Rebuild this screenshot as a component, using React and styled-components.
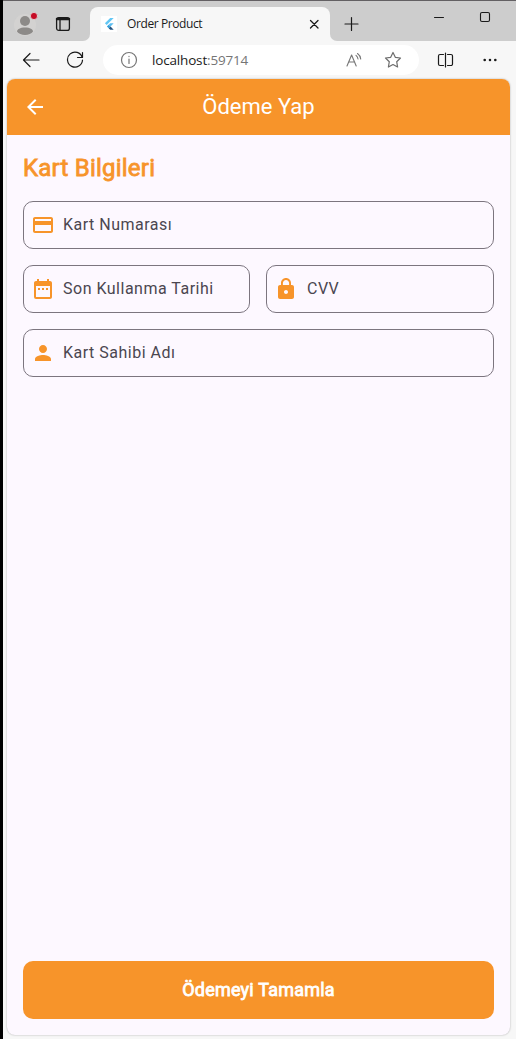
import React from 'react';
import styled, { createGlobalStyle } from 'styled-components';
import { MdArrowBack, MdCreditCard, MdDateRange, MdLock, MdPerson } from 'react-icons/md';

const orange = '#f7942a';

const GlobalStyle = createGlobalStyle`
  * { box-sizing: border-box; }
  body { margin: 0; background: #f7f7f7; }
`;

const Window = styled.div`
  display: flex;
  flex-direction: column;
  width: 516px;
  height: 1039px;
  border-left: 3px solid #000;
  background: #f7f7f7;
  overflow: hidden;
`;

const TabStrip = styled.div`
  display: flex;
  flex: none;
  height: 41px;
  border-top: 1px solid #636063;
`;

const StripStart = styled.div`
  display: flex;
  align-items: flex-start;
  width: 87px;
  padding: 10px 0 0 11px;
  gap: 14px;
  background: #cdcdcd;
  border-bottom-right-radius: 7px;
`;

const StripEnd = styled.div`
  display: flex;
  flex: 1;
  align-items: flex-start;
  padding: 8px 0 0 13px;
  background: #cdcdcd;
  border-bottom-left-radius: 7px;
`;

const TabSlot = styled.div`
  width: 240px;
  padding-top: 6px;
  background: #cdcdcd;
`;

const Tab = styled.div`
  display: flex;
  align-items: center;
  height: 34px;
  padding: 0 9px 0 11px;
  border-radius: 8px 8px 0 0;
  background: #f7f7f7;
`;

const Favicon = styled.span`
  display: flex;
  align-items: center;
  justify-content: center;
  width: 16px;
  height: 16px;
  background: #fff;
`;

const TabTitle = styled.span`
  flex: 1;
  margin-left: 10px;
  font: 12px/16px "Open Sans", "Noto Sans", sans-serif;
  letter-spacing: -0.4px;
  color: #1b1b1b;
`;

const Toolbar = styled.div`
  display: flex;
  align-items: center;
  flex: none;
  height: 38px;
  padding: 0 17px 0 19px;
`;

const AddressBar = styled.div`
  display: flex;
  align-items: center;
  width: 316px;
  height: 30px;
  margin: 0 18px 0 19px;
  padding: 0 17px 0 17px;
  border-radius: 15px;
  background: #fff;
`;

const Address = styled.span`
  flex: 1;
  margin-left: 14px;
  font: 13.5px/20px "Open Sans", "Noto Sans", sans-serif;
  letter-spacing: -0.17px;
  color: #1b1b1b;
`;

const Port = styled.span`
  color: #757575;
`;

const Glyph = styled.svg`
  display: block;
  flex: none;
  fill: none;
  stroke: ${({ $color }) => $color || '#1a1a1a'};
  stroke-width: ${({ $weight }) => $weight || 1.2};
  stroke-linecap: round;
  stroke-linejoin: round;
  margin-left: ${({ $before }) => $before || 0}px;
  margin-top: ${({ $drop }) => $drop || 0}px;
`;

const Page = styled.main`
  display: flex;
  flex-direction: column;
  width: 503px;
  height: 956px;
  margin-left: 4px;
  border-radius: 8px;
  background: #fdf8ff;
  box-shadow: 0 0 2px rgba(0, 0, 0, 0.32);
  overflow: hidden;
  font-family: Roboto, sans-serif;
`;

const AppBar = styled.header`
  display: grid;
  grid-template-columns: 56px 1fr 56px;
  align-items: center;
  justify-items: center;
  flex: none;
  height: 56px;
  background: ${orange};
  color: #fff;
`;

const AppTitle = styled.h1`
  margin: 0;
  font-size: 22px;
  font-weight: 400;
  line-height: 28px;
`;

const Content = styled.div`
  display: flex;
  flex: 1;
  flex-direction: column;
  padding: 16px;
`;

const Heading = styled.h2`
  margin: 0 0 16px;
  font-size: 24px;
  font-weight: 400;
  line-height: 34px;
  letter-spacing: 0.22px;
  color: ${orange};
  -webkit-text-stroke: 0.8px ${orange};
`;

const Form = styled.div`
  display: flex;
  flex: 1;
  flex-direction: column;
  gap: 16px;
`;

const FieldRow = styled.div`
  display: grid;
  grid-template-columns: ${({ $columns }) => $columns || '1fr'};
  gap: 16px;
`;

const FieldBox = styled.label`
  display: flex;
  align-items: center;
  height: 48px;
  padding-left: 7px;
  gap: ${({ $gap }) => $gap || 8}px;
  border: 1px solid #7c757f;
  border-radius: 10px;
  color: #4b4650;
  font-size: 16px;
  line-height: 24px;
  letter-spacing: 0.5px;

  svg {
    flex: none;
    color: ${orange};
  }
`;

const FieldText = styled.span`
  white-space: nowrap;
`;

const SubmitButton = styled.button`
  height: 58px;
  padding: 0;
  border: 0;
  border-radius: 10px;
  background: ${orange};
  color: #fff;
  font: 400 18px/24px Roboto, sans-serif;
  letter-spacing: 0.22px;
  -webkit-text-stroke: 0.8px #fff;
`;

function Field({ icon: Icon, label, gap }) {
  return (
    <FieldBox $gap={gap}>
      <Icon size={24} />
      <FieldText>{label}</FieldText>
    </FieldBox>
  );
}

function BrowserTabs() {
  return (
    <TabStrip>
      <StripStart>
        <Glyph width="26" height="26" viewBox="0 0 26 26">
          <circle cx="11" cy="14" r="11" fill="#d3d2d1" stroke="none" />
          <circle cx="11" cy="10" r="5" fill="#8c8a88" stroke="none" />
          <path d="M3 20.500c0-2.300 3-4 8-4s8 1.700 8 4c-1.500 2.300-4.500 3.500-8 3.500s-6.500-1.200-8-3.500Z" fill="#8c8a88" stroke="none" />
          <circle cx="20" cy="5" r="3.600" fill="#c60b25" stroke="#e1dada" strokeWidth=".8" />
        </Glyph>
        <Glyph width="16" height="16" viewBox="0 0 16 16" $drop={5} $before={1} $weight={1.3}>
          <rect x="1.600" y="1.600" width="12.800" height="12.800" rx="2.200" />
          <path d="M2 3h12" strokeWidth="2.500" />
          <path d="M5 4v10" />
        </Glyph>
      </StripStart>
      <TabSlot>
        <Tab>
          <Favicon>
            <svg width="16" height="16" viewBox="0 0 16 16">
              <path d="M9.200 2h3.500l-7 7-1.800-1.800Z" fill="#62c7f5" />
              <path d="M9.200 7.300h3.500L9.500 10.500l-1.800-1.800Z" fill="#5abdf0" />
              <path d="M5.900 10.500 7.700 8.700l1.800 1.800-1.800 1.800Z" fill="#319fdd" />
              <path d="m7.700 12.300 1.800-1.800 3.200 3.200H9.200Z" fill="#24527e" />
            </svg>
          </Favicon>
          <TabTitle>Order Product</TabTitle>
          <Glyph width="13" height="13" viewBox="0 0 13 13" $weight={1.3}>
            <path d="m2.500 2.500 7.500 7.500m0-7.500L2.500 10" />
          </Glyph>
        </Tab>
      </TabSlot>
      <StripEnd>
        <Glyph width="18" height="18" viewBox="0 0 18 18" $drop={6} $before={-1}>
          <path d="M9.500 2.500v13M3 9h13" />
        </Glyph>
        <Glyph width="12" height="12" viewBox="0 0 12 12" $drop={3} $before={73} $weight={1}>
          <path d="M1.500 5.500h9" />
        </Glyph>
        <Glyph width="12" height="12" viewBox="0 0 12 12" $drop={2} $before={34} $weight={1.1}>
          <rect x="1.500" y="1.500" width="9" height="9" rx="1.500" />
        </Glyph>
      </StripEnd>
    </TabStrip>
  );
}

function BrowserToolbar() {
  return (
    <Toolbar>
      <Glyph width="18" height="18" viewBox="0 0 18 18">
        <path d="M8 2.500 1.500 9 8 15.500M1.500 9H17" />
      </Glyph>
      <Glyph width="18" height="18" viewBox="0 0 18 18" $before={26}>
        <path d="M16.200 6.500A7.500 7.500 0 1 0 16.500 9M16.500 1.500v5h-5" />
      </Glyph>
      <AddressBar>
        <Glyph width="18" height="18" viewBox="0 0 18 18" $color="#767676">
          <circle cx="9" cy="9" r="7.500" />
          <path d="M9 8v4.500M9 5.400v.2" />
        </Glyph>
        <Address>localhost<Port>:59714</Port></Address>
        <Glyph width="18" height="18" viewBox="0 0 18 18" $color="#767676" $weight={1.1}>
          <path d="m2 15 4.600-11 4.600 11M3.500 11h6.200M11 4.400c1.200 1 1.800 2.100 2 3.600M12.500 2.500c2 1.400 3 3.200 3.200 5.500" />
        </Glyph>
        <Glyph width="18" height="18" viewBox="0 0 18 18" $before={21} $color="#6d6d6d">
          <path d="m9 1.500 2.300 4.800 5.200.7-3.800 3.700.9 5.300L9 13.500 4.400 16l.9-5.300L1.500 7l5.200-.7Z" />
        </Glyph>
      </AddressBar>
      <Glyph width="18" height="18" viewBox="0 0 18 18">
        <path d="M6.500 3.500H3a1.500 1.500 0 0 0-1.500 1.500v8A1.500 1.500 0 0 0 3 14.500h3.500M10.500 3.500H14A1.500 1.500 0 0 1 15.500 5v8a1.500 1.500 0 0 1-1.500 1.500h-3.500M8.500 2v14" />
      </Glyph>
      <Glyph width="18" height="18" viewBox="0 0 18 18" $before={26} $weight={2.600}>
        <path d="M3.700 9h.01M9 9h.01M14.300 9h.01" />
      </Glyph>
    </Toolbar>
  );
}

export default function App() {
  return (
    <Window>
      <GlobalStyle />
      <BrowserTabs />
      <BrowserToolbar />
      <Page>
        <AppBar>
          <MdArrowBack size={24} />
          <AppTitle>Ödeme Yap</AppTitle>
        </AppBar>
        <Content>
          <Heading>Kart Bilgileri</Heading>
          <Form>
            <FieldRow>
              <Field icon={MdCreditCard} label="Kart Numarası" />
            </FieldRow>
            <FieldRow $columns="227px 1fr">
              <Field icon={MdDateRange} label="Son Kullanma Tarihi" />
              <Field icon={MdLock} label="CVV" gap={9} />
            </FieldRow>
            <FieldRow>
              <Field icon={MdPerson} label="Kart Sahibi Adı" />
            </FieldRow>
          </Form>
          <SubmitButton>Ödemeyi Tamamla</SubmitButton>
        </Content>
      </Page>
    </Window>
  );
}
